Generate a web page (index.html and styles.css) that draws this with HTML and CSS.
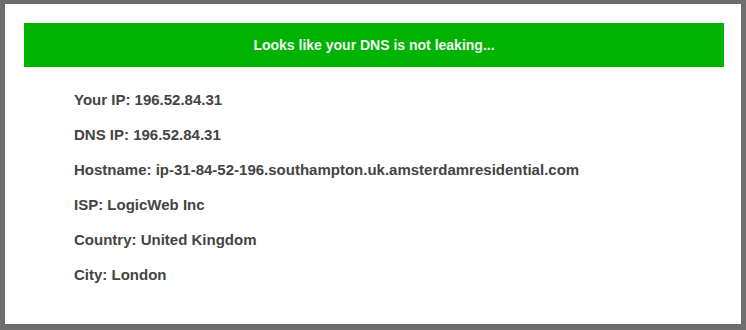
FILE: index.html
```html
<!DOCTYPE html>
<html lang="en">
<head>
  <meta charset="UTF-8">
  <title>DNS Leak Test</title>
  <link rel="stylesheet" href="styles.css">
</head>
<body>
  <div class="panel">
    <div class="status">Looks like your DNS is not leaking...</div>

    <ul class="details">
      <li>Your IP: 196.52.84.31</li>
      <li>DNS IP: 196.52.84.31</li>
      <li>Hostname: ip-31-84-52-196.southampton.uk.amsterdamresidential.com</li>
      <li>ISP: LogicWeb Inc</li>
      <li>Country: United Kingdom</li>
      <li>City: London</li>
    </ul>
  </div>
</body>
</html>
```

FILE: styles.css
```css
html, body {
  height: 100%;
}

body {
  margin: 0;
  padding: 4px 5px 6px 5px;
  box-sizing: border-box;
  background: #6e6e6e;
  font-family: 'Liberation Sans', Arial, sans-serif;
}

.panel {
  height: 100%;
  box-sizing: border-box;
  background: #fff;
  padding: 19px 17px 0 19px;
}

.status {
  height: 44px;
  line-height: 44px;
  background: #00b300;
  color: #f4f4f4;
  font-size: 14px;
  font-weight: bold;
  text-align: center;
}

.details {
  list-style: none;
  margin: 15px 0 0 0;
  padding: 0 0 0 50px;
}

.details li {
  line-height: 35px;
  font-size: 15px;
  font-weight: bold;
  color: #444;
}
```
